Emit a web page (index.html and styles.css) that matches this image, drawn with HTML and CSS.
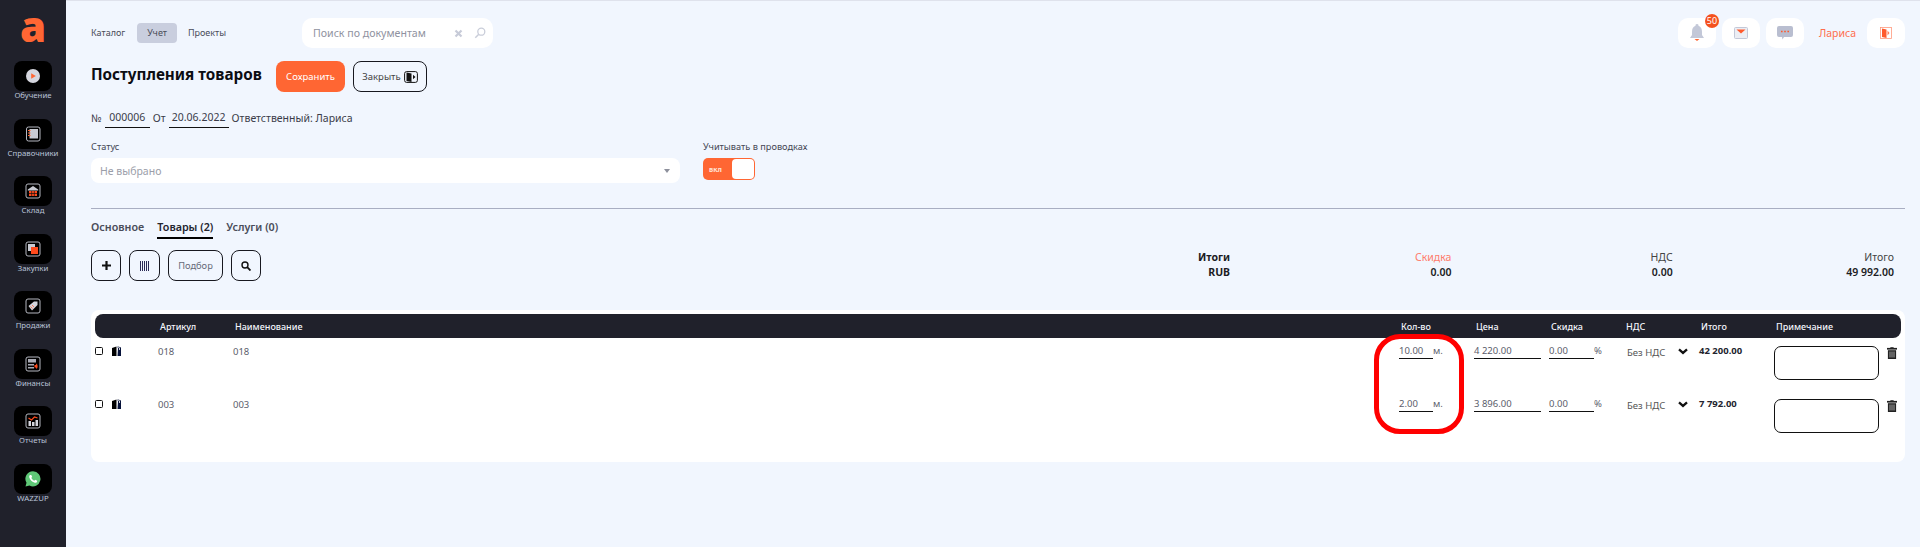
FILE: index.html
```html
<!DOCTYPE html>
<html lang="ru">
<head>
<meta charset="utf-8">
<title>Поступления товаров</title>
<link rel="stylesheet" href="styles.css">
</head>
<body>
<aside class="sidebar">
  <div class="logo">a</div>
  <nav class="side-nav">
    <a class="side-item"><span class="side-box"><svg width="20" height="20" viewBox="0 0 20 20"><circle cx="10" cy="10" r="7" fill="#d5d6de"/><path d="M8.200 7.300l4.600 2.700-4.600 2.700z" fill="#ff6633"/></svg></span><span class="side-label">Обучение</span></a>
    <a class="side-item"><span class="side-box"><svg width="20" height="20" viewBox="0 0 20 20"><rect x="3.500" y="3" width="13.500" height="14" rx="2" fill="none" stroke="#b5b7c0" stroke-width="1"/><rect x="6.500" y="5" width="8.500" height="9.500" fill="#c9cbd3"/><path d="M5 6.500h2.500M5 9h2.500M5 11.500h2.500" stroke="#ff6633" stroke-width="1.100"/></svg></span><span class="side-label">Справочники</span></a>
    <a class="side-item"><span class="side-box"><svg width="20" height="20" viewBox="0 0 20 20"><rect x="3" y="3" width="14" height="14" rx="2" fill="none" stroke="#b5b7c0" stroke-width="1"/><path d="M4.800 8.500L10 5l5.200 3.500v1H4.800z" fill="#c9cbd3"/><path d="M6 10h8v5H6z" fill="#ff4a1c"/><path d="M8.700 10v5M11.300 10v5M6 12.500h8" stroke="#111" stroke-width=".7"/></svg></span><span class="side-label">Склад</span></a>
    <a class="side-item"><span class="side-box"><svg width="20" height="20" viewBox="0 0 20 20"><rect x="3" y="3" width="14" height="14" rx="2" fill="none" stroke="#b5b7c0" stroke-width="1"/><rect x="5" y="5" width="7" height="7" fill="#c9cbd3"/><rect x="8" y="8" width="7" height="7" fill="#ff4a1c"/></svg></span><span class="side-label">Закупки</span></a>
    <a class="side-item"><span class="side-box"><svg width="20" height="20" viewBox="0 0 20 20"><rect x="3" y="3" width="14" height="14" rx="2" fill="none" stroke="#b5b7c0" stroke-width="1"/><path d="M5.500 10L11 5.500h3.500V9L9 14.500z" fill="#d5d6de"/><path d="M7.500 10.500l2 2M9 9l2 2" stroke="#ff7a55" stroke-width="1"/></svg></span><span class="side-label">Продажи</span></a>
    <a class="side-item"><span class="side-box"><svg width="20" height="20" viewBox="0 0 20 20"><rect x="3" y="3" width="14" height="14" rx="2" fill="none" stroke="#b5b7c0" stroke-width="1"/><path d="M5 5h8v3.500H5zM5 10h6v1.500H5zM5 13h6v1.500H5z" fill="#a9abb5"/><path d="M13.500 9.500c1.500 1.500 1.500 4 0 5.500-1-1.500-1-4 0-5.500z" fill="#ff4a1c"/><rect x="11.500" y="11" width="2" height="2.500" fill="#ff4a1c"/></svg></span><span class="side-label">Финансы</span></a>
    <a class="side-item"><span class="side-box"><svg width="20" height="20" viewBox="0 0 20 20"><rect x="3" y="3" width="14" height="14" rx="2" fill="none" stroke="#b5b7c0" stroke-width="1"/><path d="M5.500 10h2.500v5H5.500zM9 11h2.500v4H9zM12.500 9H15v6h-2.500z" fill="#d5d6de"/><path d="M5.500 7l3 2 3-3 3 1" fill="none" stroke="#ff4a1c" stroke-width="1.200"/></svg></span><span class="side-label">Отчеты</span></a>
    <a class="side-item"><span class="side-box"><svg width="20" height="20" viewBox="0 0 20 20"><path d="M10 2.200a7.600 7.600 0 0 0-6.500 11.500l-1 3.900 4-1A7.600 7.600 0 1 0 10 2.200z" fill="#5fc777"/><path d="M7 6c-.8.700-1 1.700-.6 2.800.8 2.200 2.600 4 4.800 4.800 1.100.4 2.100.1 2.800-.7l.2-1.100-2-1-.9 1c-1.400-.6-2.400-1.600-3-3l.9-.8-.9-2z" fill="#fff"/></svg></span><span class="side-label">WAZZUP</span></a>
  </nav>
</aside>

<main class="main">
  <header class="topbar">
    <nav class="top-nav">
      <a class="top-link">Каталог</a>
      <a class="top-link is-active">Учет</a>
      <a class="top-link">Проекты</a>
    </nav>
    <div class="search">
      <span class="search-text">Поиск по документам</span>
      <svg class="search-x" width="9" height="9" viewBox="0 0 9 9"><path d="M1.500 1.500l6 6M7.500 1.500l-6 6" stroke="#c7cbd8" stroke-width="2.200"/></svg>
      <svg class="search-glass" width="12" height="12" viewBox="0 0 12 12"><circle cx="7.300" cy="4.700" r="3.500" fill="none" stroke="#c9cdd9" stroke-width="1.300"/><path d="M4.800 7.200L1.300 10.800" stroke="#c9cdd9" stroke-width="1.500"/></svg>
    </div>
    <div class="top-right">
      <span class="top-icon"><svg width="16" height="20" viewBox="0 0 16 20"><path d="M8 1a1.500 1.500 0 0 1 1.500 1.800C12 3.700 13 6 13 9v3l2 3H1l2-3V9c0-3 1-5.300 3.500-6.200A1.500 1.500 0 0 1 8 1z" fill="#c3c8d8"/><path d="M5.500 16h5L8 18z" fill="#ff6633"/></svg><span class="badge">50</span></span>
      <span class="top-icon"><svg width="14" height="12" viewBox="0 0 14 12"><rect x=".5" y=".5" width="13" height="11" rx="1" fill="#eceef4" stroke="#c3c8d8"/><path d="M2.500 2.500h9L7 6.500z" fill="#ff5a2c"/></svg></span>
      <span class="top-icon"><svg width="16" height="14" viewBox="0 0 16 14"><path d="M2 0h12a2 2 0 0 1 2 2v7a2 2 0 0 1-2 2H7l-1.500 2.500L5 11H2a2 2 0 0 1-2-2V2a2 2 0 0 1 2-2z" fill="#b9bed0"/><path d="M4 5.500h1.600M7.200 5.500h1.600M10.400 5.500h1.600" stroke="#ff5a2c" stroke-width="1.600"/></svg></span>
      <span class="user-name">Лариса</span>
      <span class="top-icon exit"><svg width="12" height="12" viewBox="0 0 12 12"><rect x=".5" y=".5" width="11" height="11" fill="none" stroke="#ff9a7d" stroke-width=".8"/><path d="M2 1.500l4.500 1V11L2 10z" fill="#ff5a2c"/><path d="M7.500 3.500l2 2.500-2 2.500z" fill="#ff7a55"/></svg></span>
    </div>
  </header>

  <div class="title-row">
    <h1 class="title">Поступления товаров</h1>
    <button class="btn btn-primary">Сохранить</button>
    <button class="btn btn-outline">Закрыть <svg width="14" height="12" viewBox="0 0 14 12"><rect x=".6" y=".6" width="12.800" height="10.800" rx="2" fill="none" stroke="#111" stroke-width="1"/><path d="M2.500 1.500l5 1V11l-5-1z" fill="#111"/><path d="M9 3.800L11.500 6 9 8.200z" fill="#111"/></svg></button>
  </div>

  <div class="doc-line">
    <span>№</span><span class="doc-field doc-num">000006</span>
    <span>От</span><span class="doc-field doc-date">20.06.2022</span>
    <span>Ответственный: Лариса</span>
  </div>

  <div class="fields">
    <div class="field field-status">
      <label class="field-label">Статус</label>
      <div class="select"><span>Не выбрано</span><i class="select-caret"></i></div>
    </div>
    <div class="field">
      <label class="field-label">Учитывать в проводках</label>
      <div class="toggle"><span class="toggle-text">вкл</span><span class="toggle-knob"></span></div>
    </div>
  </div>

  <hr class="divider">

  <nav class="tabs">
    <a class="tab">Основное</a>
    <a class="tab is-active">Товары (2)</a>
    <a class="tab">Услуги (0)</a>
  </nav>

  <div class="toolbar">
    <div class="tools">
      <button class="btn-tool tool-plus"><svg width="9" height="9" viewBox="0 0 9 9"><path d="M4.500 0v9M0 4.500h9" stroke="#111" stroke-width="2.200"/></svg></button>
      <button class="btn-tool tool-bar"><svg width="9" height="10" viewBox="0 0 9 10"><path d="M.5 0v10M2.500 0v10M4.500 0v10M6.500 0v10M8.500 0v10" fill="none" stroke="#2a2a55" stroke-width="1"/></svg></button>
      <button class="btn-tool tool-pick">Подбор</button>
      <button class="btn-tool tool-find"><svg width="10" height="10" viewBox="0 0 10 10"><circle cx="4" cy="4" r="3" fill="none" stroke="#111" stroke-width="1.400"/><path d="M6.200 6.200L9.500 9.500" stroke="#111" stroke-width="1.800"/></svg></button>
    </div>
    <div class="totals">
      <div class="total total-head"><b>Итоги</b><b>RUB</b></div>
      <div class="total"><span class="accent">Скидка</span><b>0.00</b></div>
      <div class="total"><span>НДС</span><b>0.00</b></div>
      <div class="total"><span>Итого</span><b>49 992.00</b></div>
    </div>
  </div>

  <section class="card">
    <div class="grid head">
      <span></span><span>Артикул</span><span>Наименование</span><span>Кол-во</span><span>Цена</span><span>Скидка</span><span>НДС</span><span>Итого</span><span>Примечание</span>
    </div>

    <div class="grid row">
      <div class="cell-icons"><i class="check"></i><svg class="copy" width="10" height="10" viewBox="0 0 10 10"><path d="M0 2l4.500-1.500V10H0z" fill="#000"/><path d="M6 2.500L5 0l4 1.500V10H5.500z" fill="#06123a"/><path d="M5 .5l2.500 1.300V4" stroke="#fff" stroke-width=".8" fill="none"/></svg></div>
      <span class="text">018</span>
      <span class="text">018</span>
      <div class="cell-input"><span class="input qty">10.00</span><span class="unit">м.</span></div>
      <div class="cell-input"><span class="input price">4 220.00</span></div>
      <div class="cell-input"><span class="input disc">0.00</span><span class="unit">%</span></div>
      <div class="cell-nds"><span>Без НДС</span><svg width="10" height="7" viewBox="0 0 10 7"><path d="M1 1.300l4 3.600 4-3.600" fill="none" stroke="#111" stroke-width="2.300"/></svg></div>
      <b class="sum">42 200.00</b>
      <div class="cell-note"><span class="note"></span><svg class="trash" width="10" height="12" viewBox="0 0 10 12"><path d="M3.500 1V.3h3V1H10v1.500H0V1zM1 3.300h8V12H1z" fill="#222" stroke="#222" stroke-width=".2"/><path d="M3 4.500v6M5 4.500v6M7 4.500v6" stroke="#fff" stroke-width=".6"/></svg></div>
    </div>

    <div class="grid row">
      <div class="cell-icons"><i class="check"></i><svg class="copy" width="10" height="10" viewBox="0 0 10 10"><path d="M0 2l4.500-1.500V10H0z" fill="#000"/><path d="M6 2.500L5 0l4 1.500V10H5.500z" fill="#06123a"/><path d="M5 .5l2.500 1.300V4" stroke="#fff" stroke-width=".8" fill="none"/></svg></div>
      <span class="text">003</span>
      <span class="text">003</span>
      <div class="cell-input"><span class="input qty">2.00</span><span class="unit">м.</span></div>
      <div class="cell-input"><span class="input price">3 896.00</span></div>
      <div class="cell-input"><span class="input disc">0.00</span><span class="unit">%</span></div>
      <div class="cell-nds"><span>Без НДС</span><svg width="10" height="7" viewBox="0 0 10 7"><path d="M1 1.300l4 3.600 4-3.600" fill="none" stroke="#111" stroke-width="2.300"/></svg></div>
      <b class="sum">7 792.00</b>
      <div class="cell-note"><span class="note"></span><svg class="trash" width="10" height="12" viewBox="0 0 10 12"><path d="M3.500 1V.3h3V1H10v1.500H0V1zM1 3.300h8V12H1z" fill="#222" stroke="#222" stroke-width=".2"/><path d="M3 4.500v6M5 4.500v6M7 4.500v6" stroke="#fff" stroke-width=".6"/></svg></div>
    </div>

    <div class="highlight"></div>
  </section>
</main>
</body>
</html>
```

FILE: styles.css
```css
* { box-sizing: border-box; }
html, body { margin: 0; height: 100%; }
body {
  display: flex;
  height: 547px;
  overflow: hidden;
  font-family: "Noto Sans", "Open Sans", sans-serif;
  font-size: 10px;
  color: #333644;
  background: #f1f6fe;
}
button { font-family: inherit; cursor: pointer; }
svg { display: block; }

/* sidebar */
.sidebar {
  flex: 0 0 66px;
  background: #20212b;
  display: flex;
  flex-direction: column;
  align-items: center;
}
.logo {
  height: 61px;
  padding-top: 2px;
  font-family: "Open Sans", sans-serif;
  font-size: 42px;
  line-height: 48px;
  font-weight: 800;
  color: #ff6633;
}
.side-nav { display: flex; flex-direction: column; gap: 15.570px; align-items: center; }
.side-item { display: flex; flex-direction: column; align-items: center; height: 42px; }
.side-box {
  flex: none;
  width: 38px;
  height: 30px;
  border-radius: 8px;
  background: #000;
  display: flex;
  align-items: center;
  justify-content: center;
}
.side-label { font-size: 7.800px; line-height: 11px; margin-top: -1px; color: #b9c3d8; white-space: nowrap; }

/* main */
.main { flex: 1; min-width: 0; padding: 18px 15px 0 25px; border-top: 1px solid #dfe2ec; display: flex; flex-direction: column; }

.topbar { display: flex; align-items: center; height: 30px; margin-top: -1px; }
.top-nav { display: flex; align-items: center; gap: 1px; width: 211px; }
.top-link { font-size: 9px; padding: 0 10px; line-height: 20px; border-radius: 4px; color: #4a4c59; }
.top-link:first-child { padding-left: 0; padding-right: 11px; }
.top-link.is-active { background: #c9cede; }
.search {
  width: 191px;
  height: 30px;
  border-radius: 10px;
  background: #fff;
  display: flex;
  align-items: center;
  padding: 0 7px 0 11px;
}
.search-text { flex: 1; font-size: 10.600px; color: #8f92a0; }
.search-x { margin-right: 11px; }
.top-right { margin-left: auto; display: flex; align-items: center; }
.top-icon {
  position: relative;
  width: 38px;
  height: 30px;
  margin-right: 6px;
  border-radius: 10px;
  background: #fff;
  display: flex;
  align-items: center;
  justify-content: center;
}
.badge {
  position: absolute;
  top: -4px;
  right: -3px;
  width: 14px;
  height: 14px;
  border-radius: 50%;
  background: #f4511e;
  color: #fff;
  font-size: 9px;
  line-height: 14px;
  text-align: center;
}
.user-name { font-size: 10.500px; color: #ff6d4d; margin: 0 11px 0 9px; }
.exit { margin-right: 0; }

.title-row { display: flex; align-items: center; height: 31px; margin-top: 13px; }
.title { margin: -6px 0 0 0; width: 185px; font-size: 15.250px; font-weight: 700; white-space: nowrap; color: #0c0d12; }
.btn { height: 31px; border-radius: 8px; font-size: 9.500px; display: inline-flex; align-items: center; justify-content: center; }
.btn-primary { width: 69px; background: #ff6633; color: #fff; border: 0; margin-right: 8px; }
.btn-outline { width: 74px; gap: 3px; background: transparent; border: 1.500px solid #17181f; color: #444; padding: 0; }

.doc-line { display: flex; align-items: center; gap: 3px; height: 20px; margin-top: 16px; font-size: 10.500px; color: #3a3c49; }
.doc-field { border-bottom: 1px solid #111; text-align: center; line-height: 19px; height: 20px; }
.doc-num { width: 45px; }
.doc-date { width: 60px; }

.fields { display: flex; margin-top: 13px; gap: 23px; }
.field-status { width: 589px; }
.field-label { display: block; font-size: 9.200px; line-height: 12px; margin-bottom: 5px; color: #444654; }
.select {
  height: 25px;
  border-radius: 8px;
  background: #fff;
  display: flex;
  align-items: center;
  justify-content: space-between;
  padding: 0 10px 0 9px;
  font-size: 10.500px;
  color: #9b9ea9;
}
.select-caret { border: 3px solid transparent; border-top: 4px solid #8d909c; border-bottom: 0; }
.toggle { position: relative; width: 52px; height: 22px; border-radius: 5px; background: #ff6633; display: flex; align-items: center; padding-left: 6px; }
.toggle-text { font-size: 7px; font-weight: 700; color: #ffe2d6; }
.toggle-knob { position: absolute; right: 1px; top: 1px; width: 22px; height: 20px; border-radius: 4px; background: #fff; }

.divider { width: 100%; height: 1px; border: 0; background: #a9aec2; margin: 25px 0 0; }

.tabs { display: flex; gap: 13px; margin-top: 10px; height: 20px; font-size: 10.750px; font-weight: 600; color: #4a4c59; }
.tab { line-height: 16px; height: 20px; }
.tab.is-active { color: #23242e; border-bottom: 2px solid #000; }

.toolbar { display: flex; justify-content: space-between; margin-top: 11px; height: 31px; }
.tools { display: flex; gap: 8px; }
.btn-tool { height: 31px; border-radius: 8px; border: 1.500px solid #17181f; background: transparent; padding: 0; display: flex; align-items: center; justify-content: center; color: #666a78; font-size: 9.300px; }
.tool-plus, .tool-find { width: 30px; }
.tool-bar { width: 31px; }
.tool-pick { width: 55px; }
.totals { display: grid; grid-template-columns: repeat(4, 221.300px); margin-right: 11px; }
.total { display: flex; flex-direction: column; text-align: right; font-size: 10.500px; line-height: 15px; color: #444; }
.total b { color: #1c1c24; font-weight: 600; }
.total-head b { font-weight: 700; }
.accent { color: #ff7b6b; }

.card { position: relative; height: 152px; margin-top: 29px; border-radius: 8px; background: #fff; padding: 4px 4px 0; }
.grid { display: grid; grid-template-columns: 63px 75px 1fr 75px 75px 75px 75px 75px 127px; }
.head { height: 24px; background: #20212b; border-radius: 8px; color: #f3f5fb; font-size: 9px; font-weight: 500; align-items: center; }
.head span { padding-left: 2px; }
.row { height: 53px; padding-top: 6px; align-items: start; color: #5b5d6b; font-size: 9.500px; }
.row .text { line-height: 16px; }
.cell-icons { display: flex; align-items: center; gap: 9px; height: 14px; }
.check { display: block; flex: none; width: 8px; height: 8px; border: 1.300px solid #111; border-radius: 1.500px; }
.copy { flex: none; }
.cell-input { display: flex; align-items: flex-start; }
.input { display: block; border-bottom: 1px solid #111; height: 15px; line-height: 14px; }
.qty { width: 34px; }
.price { width: 67px; }
.disc { width: 45px; }
.unit { line-height: 14px; }
.cell-nds { display: flex; align-items: center; height: 16px; padding-left: 3px; color: #555; font-size: 9.500px; }
.cell-nds svg { margin-left: 13px; margin-top: -1px; }
.sum { font-size: 9.500px; font-weight: 700; line-height: 14px; color: #23242e; }
.cell-note { display: flex; align-items: flex-start; }
.note { width: 105px; height: 34px; margin-top: 2px; border: 1.300px solid #111; border-radius: 7px; }
.trash { margin: 3px 0 0 8px; }

.highlight {
  position: absolute;
  left: 1283px;
  top: 24px;
  width: 90px;
  height: 100px;
  border: 5px solid #ff0000;
  border-radius: 26px;
  pointer-events: none;
}
```
